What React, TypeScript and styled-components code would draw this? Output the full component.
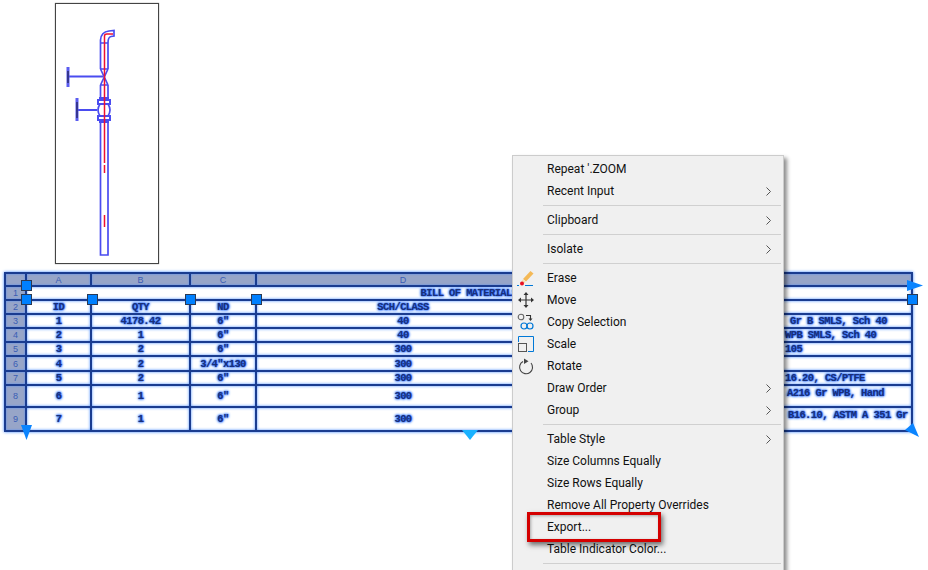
import styled, { createGlobalStyle } from "styled-components";

const GlobalStyle = createGlobalStyle`
  html, body {
    margin: 0;
    padding: 0;
    background: #fff;
    overflow: hidden;
  }
`;

const Page = styled.div`
  position: relative;
  width: 928px;
  height: 570px;
  overflow: hidden;
  display: flex;
  flex-direction: column;
  align-items: flex-start;
`;

const DrawingFrame = styled.div`
  width: 102px;
  height: 259px;
  margin: 3px 0 0 55px;
  border: 1px solid #444;
  box-shadow: 0 0 1px #777;
  flex: none;
`;

const TableGrid = styled.div`
  display: grid;
  grid-template-columns: 19px 63px 97px 64px 292px 360px;
  grid-template-rows: 11px 12px 12px 12px 12px 12px 13px 12px 20px 22px;
  gap: 2px;
  padding: 2px;
  margin: 8px 0 0 4px;
  background: #1a3c90;
  box-shadow: 0 0 3px #3f86ff;
  flex: none;
`;

const HeadCell = styled.div`
  display: flex;
  align-items: center;
  justify-content: center;
  background: #97a5c8;
  box-shadow: inset 0 0 2px #4f8dff;
  color: #3a5db5;
  font: 9px "Liberation Sans", sans-serif;
`;

const Cell = styled.div<{ $span?: boolean; $indent?: number; $top?: boolean }>`
  display: flex;
  align-items: ${(p) => (p.$top ? "flex-start" : "center")};
  justify-content: ${(p) => (p.$indent !== undefined ? "flex-start" : "center")};
  padding-left: ${(p) => p.$indent ?? 0}px;
  padding-top: ${(p) => (p.$top ? 1 : 0)}px;
  grid-column: ${(p) => (p.$span ? "2 / 7" : "auto")};
  background: #fff;
  box-shadow: inset 0 0 3px #4d8fff;
  color: #1a2f78;
  font: bold 10.5px "Liberation Mono", monospace;
  letter-spacing: -0.6px;
  white-space: pre;
  overflow: hidden;
  text-shadow: 0 0 1px #2f6dff, 0 0 2px #2f6dff, 0 0 3px #4d8fff, 0 0 3px #4d8fff;
`;

const GripHandle = styled.div<{ $x: number; $y: number }>`
  position: absolute;
  left: ${(p) => p.$x}px;
  top: ${(p) => p.$y}px;
  width: 9px;
  height: 9px;
  background: #0080ff;
  border: 1px solid #2b3a55;
`;

const ArrowGrip = styled.svg<{ $x: number; $y: number }>`
  position: absolute;
  left: ${(p) => p.$x}px;
  top: ${(p) => p.$y}px;
`;

const Menu = styled.div`
  position: absolute;
  left: 512px;
  top: 155px;
  width: 272px;
  height: 430px;
  padding: 2px 0 0;
  box-sizing: border-box;
  background: #f0f0f0;
  border: 1px solid #ccc;
  box-shadow: 3px 3px 4px rgba(0, 0, 0, 0.45);
  font: 12px Roboto, "Liberation Sans", sans-serif;
  color: #111;
`;

const MenuRow = styled.div`
  display: flex;
  align-items: center;
  height: 22px;
`;

const IconSlot = styled.div`
  width: 26px;
  height: 22px;
  padding-right: 8px;
  display: flex;
  align-items: center;
  justify-content: center;
  flex: none;
`;

const MenuLabel = styled.span`
  flex: 1;
`;

const Chevron = styled.svg`
  margin-right: 12px;
`;

const Separator = styled.div`
  height: 1px;
  margin: 3px 2px 3px 30px;
  background: #d0d0d0;
`;

const Highlight = styled.div`
  position: absolute;
  left: 527px;
  top: 512px;
  width: 128px;
  height: 24px;
  border: 3px solid #d40000;
  box-shadow: 2px 3px 5px rgba(0, 0, 0, 0.55), inset 1px 1px 3px rgba(0, 0, 0, 0.3);
`;

const PipeDrawing = () => (
  <svg width="102" height="259" viewBox="56 4 102 259" fill="none">
    <g stroke="#4a4cf0" strokeWidth="1.7">
      <path d="M100.500 43 V40 Q101 32 109 31 L114 30.500 V36 L111 36.500 Q108 37 108 43" />
      <path d="M100.500 43 H108 M100.500 43 V69 M108 43 V69 M100.500 69 H108" />
      <path d="M100.500 69 L108 85 M108 69 L100.500 85 M100.500 85 H108" />
      <path d="M100.500 85 V98 M108 85 V98" />
      <path d="M98 100 H110 V104 H98 Z M99 98 H109 M98 116 H110 V120 H98 Z M99 122 H109" strokeWidth="2" />
      <path d="M100 104 Q96 110 100 116 M108 104 Q112 110 108 116" />
      <path d="M100.500 122 V255 H108 V122" />
    </g>
    <path d="M68 76.500 H103 M77 110 H97" stroke="#4a4cf0" strokeWidth="2.200" />
    <path d="M68 67 V87 M77 98 V121" stroke="#5a5cf0" strokeWidth="3" />
    <path d="M68 71 V83 M77 102 V118" stroke="#2a2a70" strokeWidth="1.500" />
    <path d="M104.500 227 V215 M104.500 173 V165 M104.500 163 V36 Q104.500 34 107 34 H113" stroke="#f01030" strokeWidth="1.500" />
  </svg>
);

const EraseIcon = () => (
  <svg width="18" height="18" viewBox="0 0 18 18" fill="none">
    <path d="M6 10 L13.500 2 L16.500 4.500 L9 12.500 Z" fill="#f4b957" />
    <path d="M5.500 10.500 L8.500 13 L7 14.500 L4.500 13 Z" fill="#f7dcae" />
    <circle cx="5" cy="14.500" r="2" fill="#e81123" />
    <path d="M0 16.500 H2 M8 16.500 H16" stroke="#0078d7" strokeWidth="1" />
  </svg>
);

const MoveIcon = () => (
  <svg width="16" height="16" viewBox="0 0 16 16" fill="none">
    <path d="M8 2 V14 M2 8 H14" stroke="#333" strokeWidth="1.200" />
    <path d="M8 0 L10.500 3 H5.500 Z M8 16 L10.500 13 H5.500 Z M0 8 L3 5.500 V10.500 Z M16 8 L13 5.500 V10.500 Z" fill="#333" />
  </svg>
);

const CopyIcon = () => (
  <svg width="18" height="18" viewBox="0 0 18 18" fill="none">
    <circle cx="4" cy="4" r="2.800" stroke="#666" strokeWidth="1.100" />
    <path d="M9 2.500 H13.500 V6" stroke="#333" strokeWidth="1.100" />
    <path d="M11.500 5.500 H15.500 L13.500 8 Z" fill="#333" />
    <circle cx="7" cy="13" r="3" stroke="#0078d7" strokeWidth="1.200" />
    <circle cx="13" cy="13" r="3" stroke="#0078d7" strokeWidth="1.200" />
  </svg>
);

const ScaleIcon = () => (
  <svg width="16" height="16" viewBox="0 0 16 16" fill="none">
    <path d="M0.500 6 V0.500 H15.500 V15.500 H10" stroke="#0078d7" />
    <rect x="0.500" y="7.500" width="8" height="8" stroke="#555" />
  </svg>
);

const RotateIcon = () => (
  <svg width="16" height="17" viewBox="0 0 16 17" fill="none">
    <path d="M5 3.500 A6.500 6.500 0 1 0 13 5" stroke="#444" strokeWidth="1.100" />
    <path d="M6 0.500 L10.500 3.200 L6 6 Z" fill="#444" />
  </svg>
);

type MenuEntry = {
  label?: string;
  sub?: boolean;
  icon?: React.ReactNode;
};

const menuEntries: MenuEntry[] = [
  { label: "Repeat '.ZOOM" },
  { label: "Recent Input", sub: true },
  {},
  { label: "Clipboard", sub: true },
  {},
  { label: "Isolate", sub: true },
  {},
  { label: "Erase", icon: <EraseIcon /> },
  { label: "Move", icon: <MoveIcon /> },
  { label: "Copy Selection", icon: <CopyIcon /> },
  { label: "Scale", icon: <ScaleIcon /> },
  { label: "Rotate", icon: <RotateIcon /> },
  { label: "Draw Order", sub: true },
  { label: "Group", sub: true },
  {},
  { label: "Table Style", sub: true },
  { label: "Size Columns Equally" },
  { label: "Size Rows Equally" },
  { label: "Remove All Property Overrides" },
  { label: "Export..." },
  { label: "Table Indicator Color..." },
  {},
];

const bodyRows = [
  { n: "3", cells: ["1", "4178.42", '6"', "40"], last: "Gr B SMLS, Sch 40", indent: 239 },
  { n: "4", cells: ["2", "1", '6"', "40"], last: "WPB SMLS, Sch 40", indent: 234 },
  { n: "5", cells: ["3", "2", '6"', "300"], last: "105", indent: 234 },
  { n: "6", cells: ["4", "2", '3/4"x130', "300"], last: "", indent: 234 },
  { n: "7", cells: ["5", "2", '6"', "300"], last: "16.20, CS/PTFE", indent: 234 },
  { n: "8", cells: ["6", "1", '6"', "300"], last: "A216 Gr WPB, Hand", indent: 236, top: true },
  { n: "9", cells: ["7", "1", '6"', "300"], last: "B16.10, ASTM A 351 Gr", indent: 237, top: true },
];

const squareGrips = [
  [21, 280],
  [21, 294],
  [87, 294],
  [185, 294],
  [251, 294],
  [907, 294],
];

export default function App() {
  return (
    <Page>
      <GlobalStyle />
      <DrawingFrame>
        <PipeDrawing />
      </DrawingFrame>

      <TableGrid>
        <HeadCell />
        {["A", "B", "C", "D", ""].map((letter) => (
          <HeadCell key={letter}>{letter}</HeadCell>
        ))}

        <HeadCell>1</HeadCell>
        <Cell $span>BILL OF MATERIALS</Cell>

        <HeadCell>2</HeadCell>
        {["ID", "QTY", "ND", "SCH/CLASS"].map((title) => (
          <Cell key={title}>{title}</Cell>
        ))}
        <Cell />

        {bodyRows.map((row) => (
          <div key={row.n} style={{ display: "contents" }}>
            <HeadCell>{row.n}</HeadCell>
            {row.cells.map((text, i) => (
              <Cell key={i}>{text}</Cell>
            ))}
            <Cell $indent={row.indent} $top={row.top}>
              {row.last}
            </Cell>
          </div>
        ))}
      </TableGrid>

      {squareGrips.map(([x, y]) => (
        <GripHandle key={`${x}-${y}`} $x={x} $y={y} />
      ))}

      <ArrowGrip $x={21} $y={425} width="11" height="15" viewBox="0 0 11 15">
        <path d="M0 0 H11 L5.500 15 Z" fill="#0a84ff" />
      </ArrowGrip>
      <ArrowGrip $x={462} $y={430} width="16" height="10" viewBox="0 0 16 10">
        <path d="M0 0 H16 L8 10 Z" fill="#19b2ff" />
      </ArrowGrip>
      <ArrowGrip $x={907} $y={280} width="16" height="11" viewBox="0 0 16 11">
        <path d="M0 0 L16 5.500 L0 11 Z" fill="#0a84ff" />
      </ArrowGrip>
      <ArrowGrip $x={905} $y={423} width="14" height="14" viewBox="0 0 14 14">
        <path d="M8 0 L0 7 L14 14 Z" fill="#0a84ff" />
      </ArrowGrip>

      <Menu>
        {menuEntries.map((entry, i) =>
          entry.label ? (
            <MenuRow key={i}>
              <IconSlot>{entry.icon}</IconSlot>
              <MenuLabel>{entry.label}</MenuLabel>
              {entry.sub && (
                <Chevron width="5" height="9" viewBox="0 0 5 9" fill="none">
                  <path d="M0.500 0.500 L4.500 4.500 L0.500 8.500" stroke="#555" />
                </Chevron>
              )}
            </MenuRow>
          ) : (
            <Separator key={i} />
          ),
        )}
      </Menu>
      <Highlight />
    </Page>
  );
}
